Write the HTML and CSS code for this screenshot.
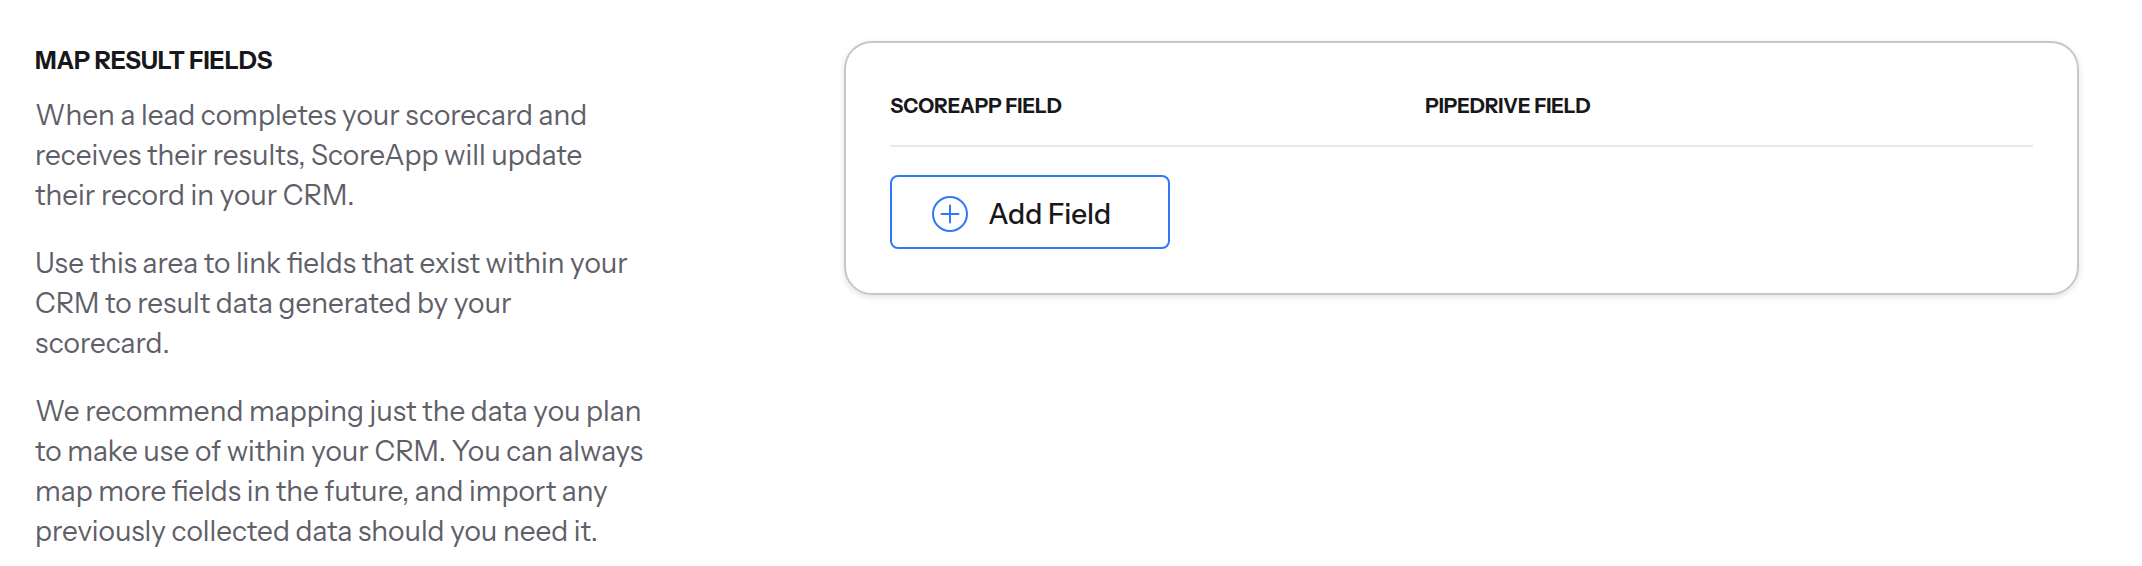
FILE: index.html
```html
<!DOCTYPE html>
<html lang="en">
<head>
    <meta charset="UTF-8">
    <meta name="viewport" content="width=device-width, initial-scale=1.0">
    <title>Map Result Fields</title>
    <link rel="stylesheet" href="styles.css">
</head>
<body>
    <main class="mapping">
        <section class="intro">
            <h2>MAP RESULT FIELDS</h2>
            <p>When a lead completes your scorecard and receives their results, ScoreApp will update their record in your CRM.</p>
            <p>Use this area to link fields that exist within your CRM to result data generated by your scorecard.</p>
            <p>We recommend mapping just the data you plan to make use of within your CRM. You can always map more fields in the future, and import any previously collected data should you need it.</p>
        </section>

        <section class="card">
            <table class="fields">
                <thead>
                    <tr>
                        <th scope="col">SCOREAPP FIELD</th>
                        <th scope="col">PIPEDRIVE FIELD</th>
                    </tr>
                </thead>
            </table>
            <button type="button" class="add-btn">
                <svg class="add-icon" viewBox="0 0 36 36" aria-hidden="true">
                    <circle cx="18" cy="18" r="17"/>
                    <path d="M18 9.5v17M9.5 18h17"/>
                </svg>
                Add Field
            </button>
        </section>
    </main>
</body>
</html>
```

FILE: styles.css
```css
* {
    margin: 0;
    padding: 0;
    box-sizing: border-box;
}

body {
    background: #fff;
    color: #18181b;
    font-family: 'Instrument Sans', 'Liberation Sans', Arial, sans-serif;
}

.mapping {
    display: grid;
    grid-template-columns: 1fr 2fr;
    column-gap: 192px;
    align-items: start;
    padding: 41px 63px 0 35px;
}

.intro {
    max-width: 612px;
}

.intro h2 {
    font-size: 24px;
    line-height: 40px;
    margin-bottom: 14px;
}

.intro p {
    color: #5f5f69;
    font-size: 28px;
    line-height: 40px;
    margin-bottom: 28px;
}

.intro p:last-child {
    margin-bottom: 0;
}

.card {
    border: 2px solid #c6c6cc;
    border-radius: 28px;
    padding: 44px;
    box-shadow: 0 2px 6px rgba(0, 0, 0, 0.12);
}

.fields {
    width: 100%;
    table-layout: fixed;
    border-collapse: collapse;
    margin-bottom: 28px;
}

.fields th {
    border-bottom: 2px solid #e8e8e8;
    padding-bottom: 20px;
    font-size: 20px;
    line-height: 38px;
    text-align: left;
}

.fields th:first-child {
    width: 535px;
}

.add-btn {
    display: flex;
    align-items: center;
    gap: 20px;
    border: 2px solid #2f7bf6;
    border-radius: 8px;
    background: #fff;
    color: #18181b;
    padding: 18px 57px 14px 40px;
    font-family: inherit;
    font-size: 28px;
    font-weight: 500;
    line-height: 38px;
    cursor: pointer;
}

.add-icon {
    width: 36px;
    height: 36px;
    fill: none;
    stroke: #2f7bf6;
    stroke-width: 2;
    stroke-linecap: round;
}
```
